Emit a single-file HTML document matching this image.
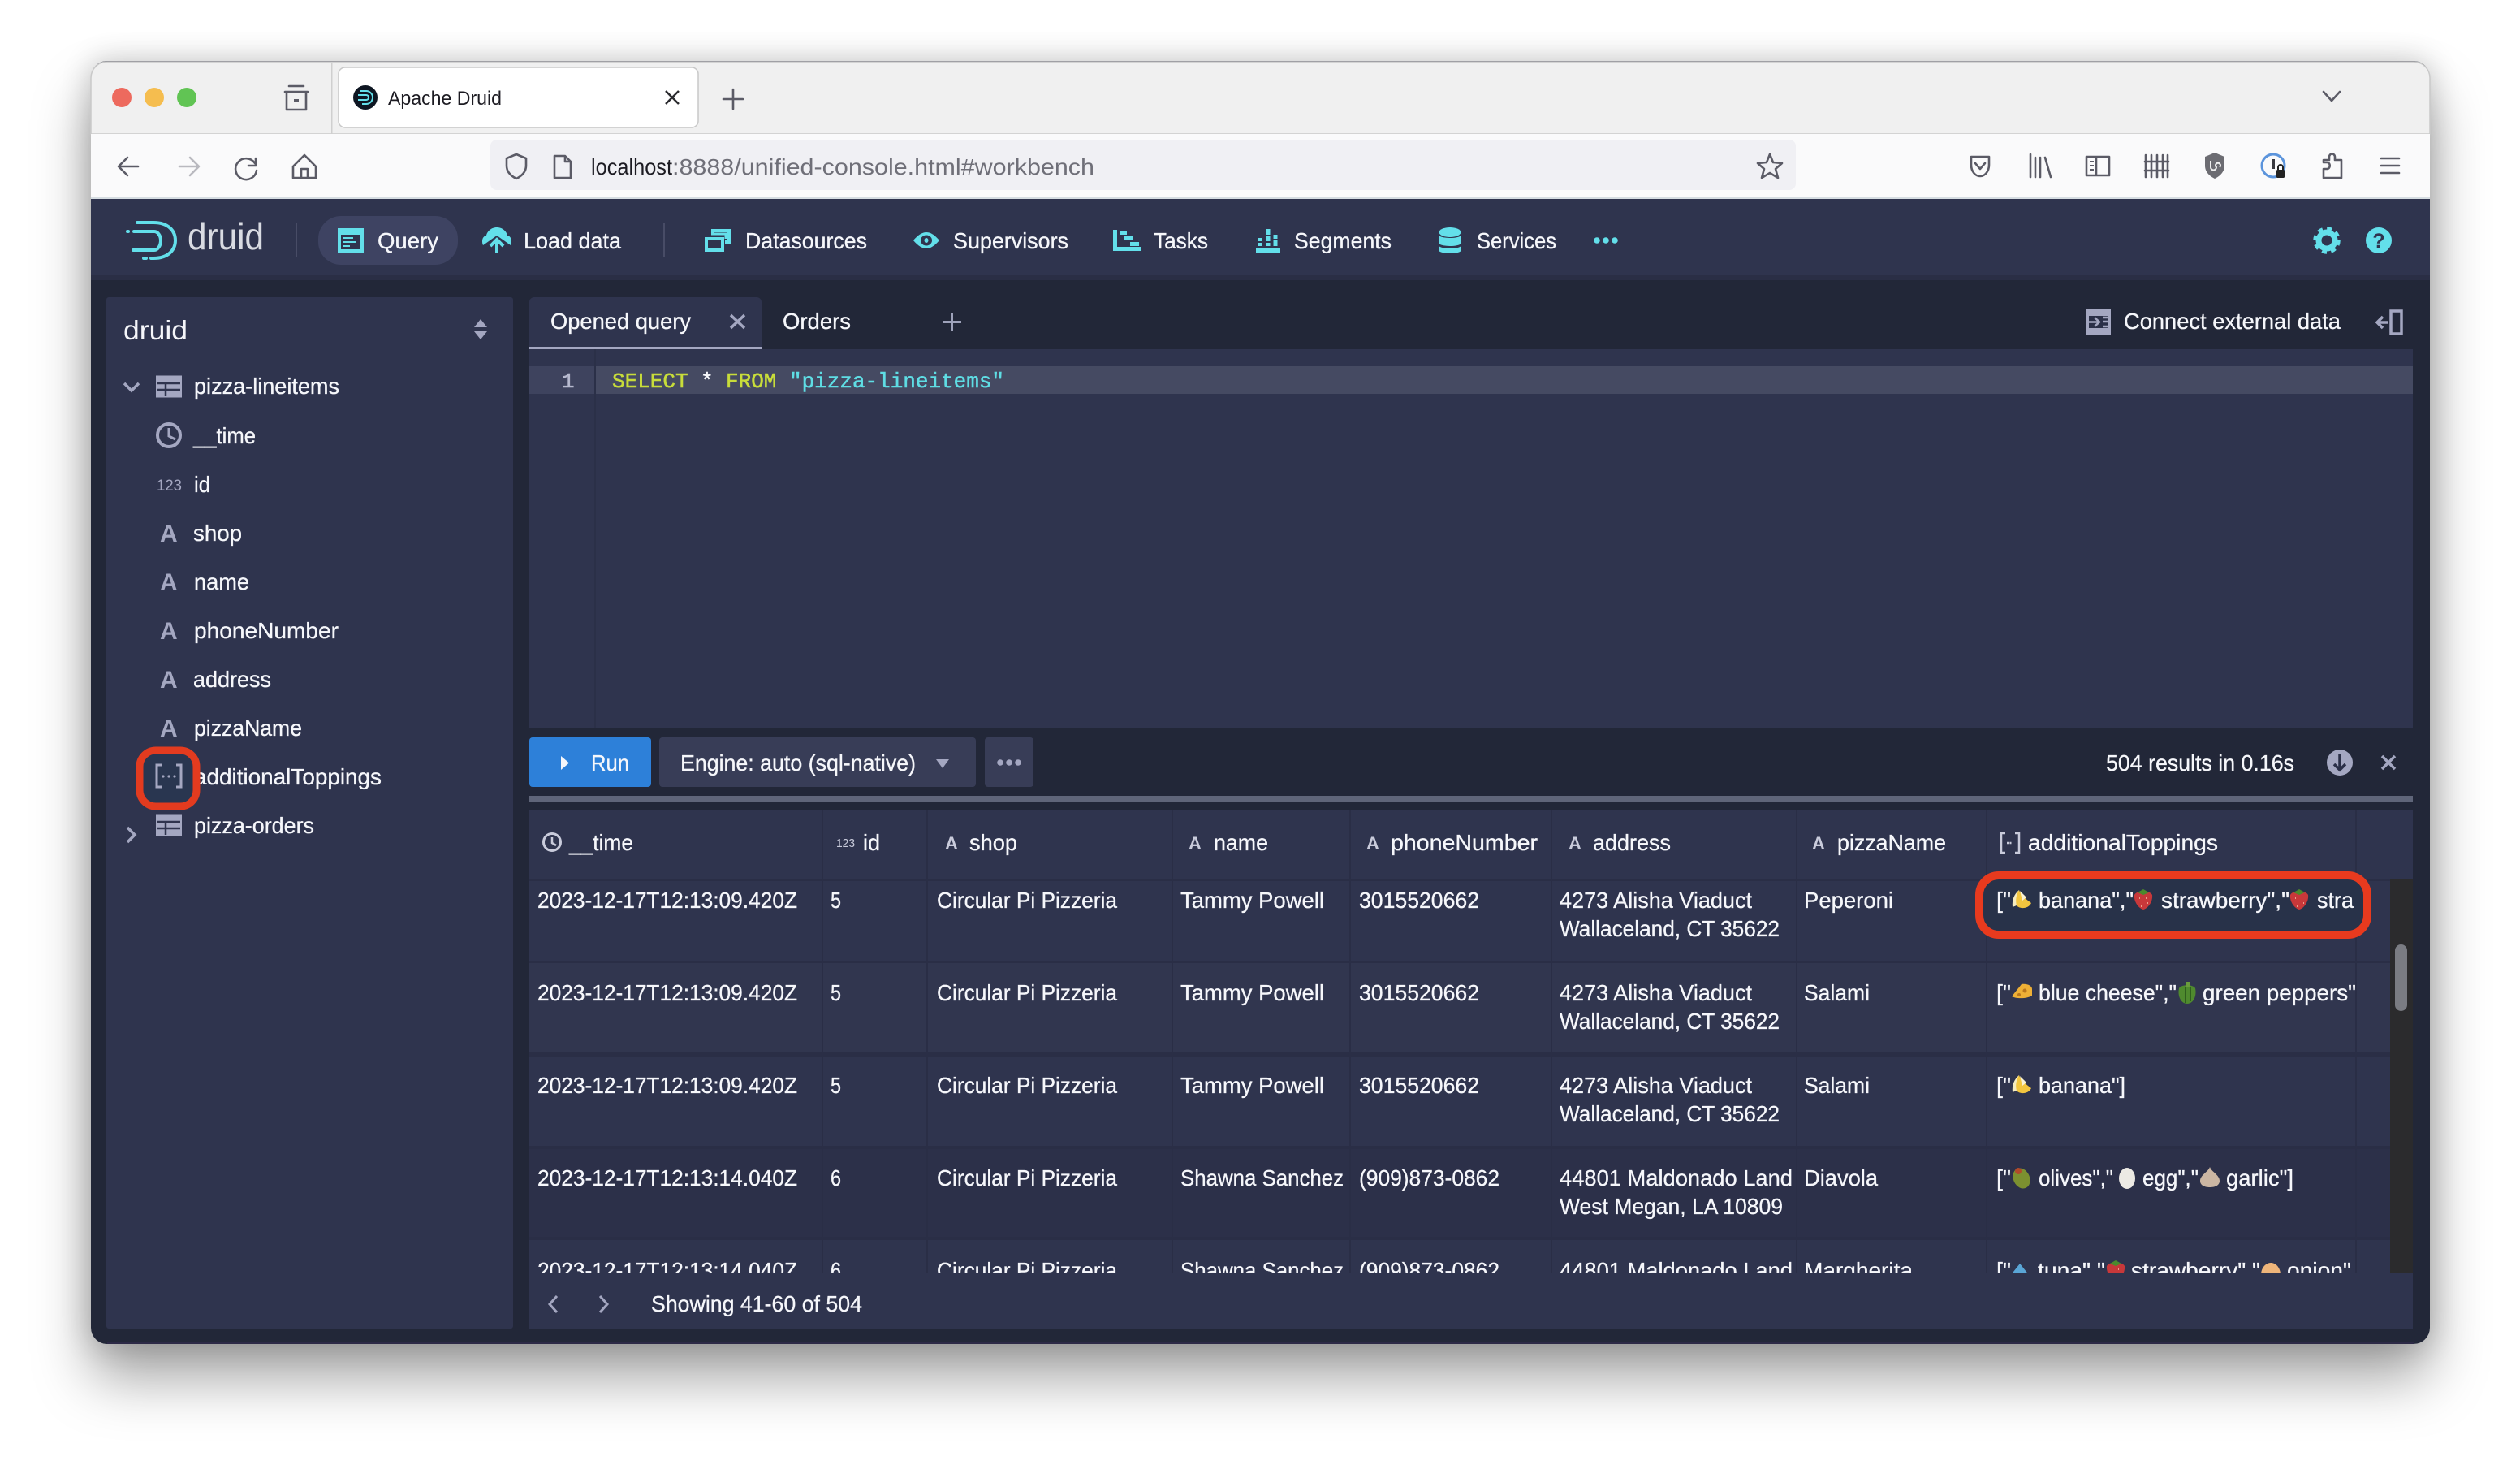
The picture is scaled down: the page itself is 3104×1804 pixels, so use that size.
<!DOCTYPE html>
<html lang="en"><head><meta charset="utf-8"><title>Apache Druid</title>
<style>
html,body{margin:0;padding:0;width:3104px;height:1804px;background:#fff;overflow:hidden}
#win{position:absolute;left:112px;top:75px;width:2881px;height:1580px;border-radius:20px;box-shadow:0 42px 70px 0 rgba(0,0,0,.36),0 0 34px 4px rgba(0,0,0,.16)}
svg{position:absolute;left:0;top:0}
text{font-family:"Liberation Sans",sans-serif;fill:#f5f6fa;font-size:27px}
.n{font-size:28px;fill:#f6f7fb;stroke:#f6f7fb;stroke-width:.3px}
.b{font-size:26px;fill:#1c1b22}
.m{font-family:"Liberation Mono",monospace;font-size:26px;stroke-width:.5px}
.A{font-size:30px;font-weight:bold;fill:#a4a7c1}
.h{font-size:22px;font-weight:bold;fill:#c9cbdb}
.s{fill:none;stroke:#5b5b66;stroke-width:2.6;stroke-linecap:round;stroke-linejoin:round}
.c{fill:#63dfea}
.g{fill:none;stroke:#a4a7c1;stroke-width:3}
</style></head><body>
<div id="win"></div>
<svg width="3104" height="1804" viewBox="0 0 3104 1804" xmlns="http://www.w3.org/2000/svg">
<defs>
<g id="tbl"><rect x="-16" y="-13.500" width="32" height="27" fill="#a4a7c1"/><path d="M-14-4H14M-14 4H14M-4-4V12" stroke="#2f344e" stroke-width="2.500" fill="none"/></g>
<g id="banana"><path d="M-3-12C-1-6 4-2 12 4 9 11-2 12-6 7-9 2-7-7-3-12Z" fill="#f3c63f"/><path d="M-3-12C-9-7-12 0-11 9L-6 7C-8 0-6-7-3-12Z" fill="#f5ecc0"/><path d="M-2-11C1-8 3-6 6-3L1 1Z" fill="#f8f2d5"/></g>
<g id="straw"><path d="M-11-6C-8-12 8-12 11-6 12 3 5 11 0 12-5 11-12 3-11-6Z" fill="#c8383a"/><path d="M-7-9 0-13 7-9 0-6Z" fill="#4b8a2d"/><path d="M-5-2h1M3-2h1M-2 3h1M5 4h1M-3 8h1" stroke="#e9a08c" stroke-width="2"/></g>
<g id="cheese"><path d="M-13 6-1-9C6-10 12-7 12-3V5C6 9-8 9-13 6Z" fill="#eeb036"/><circle cx="3" cy="-1" r="2.500" fill="#b9771d"/><circle cx="-4" cy="4" r="2" fill="#b9771d"/></g>
<g id="pepper"><path d="M-10-6C-8-11 8-11 10-6 12 3 8 13 0 13-8 13-12 3-10-6Z" fill="#4f8a2e"/><path d="M-2-8V12M4-8V10" stroke="#2f5e1e" stroke-width="2"/><rect x="-2" y="-14" width="5" height="6" fill="#6a9c3c"/></g>
<g id="olive"><ellipse rx="10" ry="13" fill="#7c9030" transform="rotate(-25)"/><circle cx="-4" cy="-9" r="4" fill="#b04a2a"/></g>
<g id="egg"><ellipse rx="10" ry="13" fill="#eceae4"/></g>
<g id="garlic"><path d="M0-14C2-8 12-4 12 3 12 9 6 11 0 11-6 11-12 9-12 3-12-4-2-8 0-14Z" fill="#cbb6a3"/></g>
<g id="tuna"><path d="M-12 6 0-9 12 6Z" fill="#5aa6d6"/></g>
<g id="onion"><path d="M-12 8C-13-4-6-10 0-10 6-10 13-4 12 8Z" fill="#eeb57a"/></g>
</defs>

<!-- window frame -->
<path d="M132 75H2973A20 20 0 0 1 2993 95V1635A20 20 0 0 1 2973 1655H132A20 20 0 0 1 112 1635V95A20 20 0 0 1 132 75Z" fill="#222738"/>
<rect x="132" y="1652" width="2841" height="3" fill="#2c2946"/>
<path d="M132 76H2973A20 20 0 0 1 2993 96V165H112V96A20 20 0 0 1 132 76Z" fill="#f0f0f0" stroke="#c9c9c9" stroke-width="1.500"/>
<rect x="112" y="165" width="2881" height="80" fill="#fafafb"/>
<rect x="112" y="243" width="2881" height="2" fill="#d6dde2"/>
<rect x="112" y="245" width="2881" height="100" fill="#2f344e"/>
<rect x="112" y="339" width="2881" height="6" fill="#2a2e45"/>

<!-- tab strip -->
<circle cx="150" cy="120" r="12" fill="#ed6a5e"/><circle cx="190" cy="120" r="12" fill="#f5bd4f"/><circle cx="230" cy="120" r="12" fill="#61c454"/>
<path class="s" d="M351 113H379M353 113V135H377V113M356 106H374" /><rect x="362" y="122" width="6" height="4" fill="#5b5b66"/>
<rect x="408" y="77" width="1.500" height="88" fill="#cfcfcf"/>
<rect x="417" y="83" width="443" height="74" rx="8" fill="#fff" stroke="#c8c8c8" stroke-width="1.500"/>
<circle cx="450" cy="120" r="15" fill="#0e1622"/>
<path d="M444 112H451A8 8 0 0 1 451 128H446M441 117H451A3 3 0 0 1 451 123H441" fill="none" stroke="#63dfea" stroke-width="2"/>
<text x="478" y="129" class="b" style="font-size:24px" textLength="140" lengthAdjust="spacingAndGlyphs">Apache Druid</text>
<path d="M820 112 836 128M836 112 820 128" stroke="#2a2a2e" stroke-width="2.500" fill="none"/>
<path class="s" d="M903 110V134M891 122H915"/>
<path class="s" d="M2862 113 2872 124 2882 113"/>

<!-- toolbar -->
<path class="s" d="M170 205H147M157 194 146 205 157 216"/>
<path class="s" style="stroke:#b9b9bf" d="M221 205H244M234 194 245 205 234 216"/>
<path class="s" d="M315 195V204H306M314 201A13 13 0 1 0 316 210"/>
<path class="s" d="M375 191 361 205V219H389V205ZM371 219V208H379V219"/>
<rect x="604" y="172" width="1608" height="62" rx="8" fill="#f0f0f4"/>
<path class="s" d="M636 190 624 195V204C624 212 630 217 636 220 642 217 648 212 648 204V195Z"/>
<path class="s" d="M683 192H696L703 199V219H683ZM696 192V199H703"/>
<text x="728" y="215" style="font-size:28px;fill:#1c1b22" textLength="100" lengthAdjust="spacingAndGlyphs">localhost</text>
<text x="828" y="215" style="font-size:28px;fill:#6f6f78" textLength="520" lengthAdjust="spacingAndGlyphs">:8888/unified-console.html#workbench</text>
<path class="s" d="M2180 190 2184 200 2195 201 2187 208 2190 219 2180 213 2170 219 2173 208 2165 201 2176 200Z"/>
<path class="s" d="M2428 193H2450V203C2450 211 2445 217 2439 217 2433 217 2428 211 2428 203ZM2433 201 2439 208 2445 201"/>
<path class="s" d="M2501 190V218M2507 194V218M2513 194V218M2519 194 2526 218"/>
<path class="s" d="M2570 193H2598V216H2570ZM2582 193V216"/><path d="M2574 199H2579M2574 204H2579M2574 209H2579" stroke="#5b5b66" stroke-width="2"/>
<path class="s" d="M2643 191V218M2650 191V218M2657 191V218M2664 191V218M2670 191V218M2642 199H2671M2642 210H2671"/>
<path d="M2728 188 2716 193V204C2716 212 2722 217 2728 220 2734 217 2740 212 2740 204V193Z" fill="#6c6c72"/>
<path d="M2723 198V206A3.500 3.500 0 0 0 2730 206A3 3 0 1 1 2734 206" fill="none" stroke="#f0f0f0" stroke-width="2"/>
<circle cx="2800" cy="204" r="14" fill="none" stroke="#5b94dc" stroke-width="3"/><rect x="2798" y="196" width="4" height="12" fill="#3a3a40"/>
<rect x="2804" y="209" width="10" height="10" rx="1.500" fill="#222"/><path d="M2806 209V206A3 3 0 0 1 2812 206V209" fill="none" stroke="#222" stroke-width="2"/>
<path class="s" d="M2862 219V208H2866C2871 208 2871 200 2866 200H2862V197H2869V193A3.500 3.500 0 0 1 2876 193V197H2884V219Z"/>
<path class="s" d="M2933 195H2955M2933 204H2955M2933 213H2955"/>

<!-- nav -->
<g fill="none" stroke="#63dfea" stroke-width="4" stroke-linecap="round">
<path d="M169 274H189C208 274 216 285 216 296 216 307 208 318 189 318H186"/>
<path d="M157 285H158M165 285H190C194 285 198 290 198 296 198 303 194 308 190 308H164"/>
<path d="M177 318H180"/>
</g>
<text x="231" y="307" style="font-size:46px;fill:#d9dbe2" textLength="94" lengthAdjust="spacingAndGlyphs">druid</text>
<rect x="364" y="275" width="2" height="41" fill="#484c66"/>
<rect x="817" y="275" width="2" height="41" fill="#484c66"/>
<rect x="392" y="266" width="172" height="60" rx="28" fill="#3e4362"/>
<rect x="416" y="281" width="32" height="30" class="c"/><rect x="420" y="289" width="24" height="18" fill="#2f344e"/>
<path d="M422 293H435M422 298H438M422 303H431" stroke="#63dfea" stroke-width="2"/>
<text x="465" y="306" class="n" textLength="75" lengthAdjust="spacingAndGlyphs">Query</text>
<path class="c" d="M612 280C619 280 624 285 625 290 630 291 631 297 629 302L612 290 595 302C593 297 594 291 599 290 600 285 605 280 612 280Z"/>
<path d="M612 311V296M604 303 612 295 620 303" fill="none" stroke="#63dfea" stroke-width="4"/>
<text x="645" y="306" class="n" textLength="120" lengthAdjust="spacingAndGlyphs">Load data</text>
<path d="M870 294H890V308H870ZM878 288V284H898V298H893" fill="none" stroke="#63dfea" stroke-width="4"/>
<path d="M876 288H894V294" fill="none" stroke="#63dfea" stroke-width="3"/>
<text x="918" y="306" class="n" textLength="150" lengthAdjust="spacingAndGlyphs">Datasources</text>
<path class="c" d="M1125 296C1131 289 1136 286 1141 286 1146 286 1151 289 1157 296 1151 303 1146 306 1141 306 1136 306 1131 303 1125 296Z"/>
<ellipse cx="1141" cy="296" rx="7" ry="6.500" fill="#2f344e"/><ellipse cx="1141" cy="296" rx="2.500" ry="3" class="c"/>
<text x="1174" y="306" class="n" textLength="142" lengthAdjust="spacingAndGlyphs">Supervisors</text>
<path class="c" d="M1371 283H1376V304H1405V309H1371Z"/><rect x="1379" y="284" width="9" height="5" class="c"/><rect x="1385" y="291" width="10" height="5" class="c"/><rect x="1392" y="298" width="11" height="5" class="c"/>
<text x="1421" y="306" class="n" textLength="67" lengthAdjust="spacingAndGlyphs">Tasks</text>
<rect x="1547" y="306" width="30" height="5" class="c"/>
<path d="M1552 293V297M1552 299V303M1562 282V289M1562 291V297M1562 299V303M1571 289V294M1571 296V303" stroke="#63dfea" stroke-width="5" fill="none"/>
<text x="1594" y="306" class="n" textLength="120" lengthAdjust="spacingAndGlyphs">Segments</text>
<ellipse cx="1786" cy="286" rx="13.500" ry="6" class="c"/><path class="c" d="M1772.500 290C1776 294 1796 294 1799.500 290V300C1796 304 1776 304 1772.500 300ZM1772.500 303C1776 307 1796 307 1799.500 303V309C1796 313 1776 313 1772.500 309Z"/>
<text x="1819" y="306" class="n" textLength="98" lengthAdjust="spacingAndGlyphs">Services</text>
<circle cx="1967" cy="296" r="3.800" class="c"/><circle cx="1978" cy="296" r="3.800" class="c"/><circle cx="1989" cy="296" r="3.800" class="c"/>
<circle cx="2866" cy="296" r="10" fill="none" stroke="#63dfea" stroke-width="7"/><circle cx="2866" cy="296" r="14.500" fill="none" stroke="#63dfea" stroke-width="4.500" stroke-dasharray="6 5.400"/>
<circle cx="2930" cy="296" r="16" class="c"/><text x="2930" y="305" text-anchor="middle" style="font-size:25px;font-weight:bold;fill:#2f344e">?</text>

<!-- sidebar -->
<rect x="131" y="366" width="501" height="1270" rx="3" fill="#2f344e"/>
<text x="152" y="418" style="font-size:33px" textLength="79" lengthAdjust="spacingAndGlyphs">druid</text>
<path d="M592 393 600 403H584ZM592 418 584 408H600Z" fill="#a4a7c1"/>
<path d="M153 472 162 481 171 472" fill="none" stroke="#a4a7c1" stroke-width="3.500"/>
<use href="#tbl" x="208" y="476"/>
<text x="239" y="485" class="n" textLength="179" lengthAdjust="spacingAndGlyphs">pizza-lineitems</text>
<circle cx="208" cy="536" r="14" class="g" style="stroke-width:4"/><path d="M208 527V537L216 541" class="g"/>
<text x="238" y="546" class="n" textLength="77" lengthAdjust="spacingAndGlyphs">__time</text>
<text x="193" y="604" style="font-size:19px;fill:#a4a7c1" textLength="31" lengthAdjust="spacingAndGlyphs">123</text>
<text x="239" y="606" class="n" textLength="20" lengthAdjust="spacingAndGlyphs">id</text>
<text x="197" y="667" class="A">A</text><text x="238" y="666" class="n" textLength="60" lengthAdjust="spacingAndGlyphs">shop</text>
<text x="197" y="727" class="A">A</text><text x="239" y="726" class="n" textLength="68" lengthAdjust="spacingAndGlyphs">name</text>
<text x="197" y="787" class="A">A</text><text x="239" y="786" class="n" textLength="178" lengthAdjust="spacingAndGlyphs">phoneNumber</text>
<text x="197" y="847" class="A">A</text><text x="238" y="846" class="n" textLength="96" lengthAdjust="spacingAndGlyphs">address</text>
<text x="197" y="907" class="A">A</text><text x="239" y="906" class="n" textLength="133" lengthAdjust="spacingAndGlyphs">pizzaName</text>
<text x="239" y="966" class="n" textLength="231" lengthAdjust="spacingAndGlyphs">additionalToppings</text>
<rect x="172" y="924" width="70" height="69" rx="20" fill="#293650" stroke="#e33b1f" stroke-width="9"/>
<path d="M199 942H193V969H199M217 942H223V969H217" class="g"/><circle cx="201" cy="956" r="1.600" fill="#a4a7c1"/><circle cx="208" cy="956" r="1.600" fill="#a4a7c1"/><circle cx="215" cy="956" r="1.600" fill="#a4a7c1"/>
<path d="M157 1019 166 1028 157 1037" fill="none" stroke="#a4a7c1" stroke-width="3.500"/>
<use href="#tbl" x="208" y="1016"/>
<text x="239" y="1026" class="n" textLength="148" lengthAdjust="spacingAndGlyphs">pizza-orders</text>

<!-- query tabs -->
<path d="M652 372A6 6 0 0 1 658 366H932A6 6 0 0 1 938 372V430H652Z" fill="#2f344e"/>
<rect x="652" y="427" width="286" height="3.500" fill="#a4a7c1"/>
<text x="678" y="405" class="n" textLength="173" lengthAdjust="spacingAndGlyphs">Opened query</text>
<path d="M900 388 917 404M917 388 900 404" stroke="#a4a7c1" stroke-width="3.500" fill="none"/>
<text x="964" y="405" class="n" textLength="84" lengthAdjust="spacingAndGlyphs">Orders</text>
<path d="M1172.500 385V408M1161 396.500H1184" stroke="#9ea2ba" stroke-width="3" fill="none"/>
<rect x="2569" y="381" width="31" height="31" fill="#a4a7c1"/><path d="M2573 389H2596V404H2573Z" fill="#2b3048"/><path d="M2569 396.500H2585M2580 391 2586 396.500 2580 402M2590 391H2596M2590 396H2596M2590 402H2596" stroke="#a4a7c1" stroke-width="2.500" fill="none"/>
<text x="2616" y="405" class="n" textLength="267" lengthAdjust="spacingAndGlyphs">Connect external data</text>
<path d="M2945 383H2958V411H2945ZM2941 397H2929M2935 390 2928 397 2935 404" fill="none" stroke="#a4a7c1" stroke-width="3.500"/>

<!-- editor -->
<rect x="652" y="430" width="2320" height="467" fill="#2f344e"/>
<rect x="652" y="451" width="82" height="34" fill="#3e435e"/>
<rect x="734" y="451" width="2238" height="34" fill="#454a62"/>
<rect x="732" y="430" width="2" height="467" fill="#2b3048"/>
<text x="692" y="477" class="m" style="fill:#b8bbd0;stroke:#b8bbd0">1</text>
<text x="754" y="477" class="m" style="fill:#c8dd3a;stroke:#c8dd3a">SELECT</text>
<text x="863" y="477" class="m" style="fill:#f6f7fb;stroke:#f6f7fb">*</text>
<text x="894" y="477" class="m" style="fill:#c8dd3a;stroke:#c8dd3a">FROM</text>
<text x="972" y="477" class="m" style="fill:#5fdde4;stroke:#5fdde4" textLength="265" lengthAdjust="spacingAndGlyphs">"pizza-lineitems"</text>

<!-- run bar -->
<rect x="652" y="908" width="150" height="61" rx="4" fill="#2d80d9"/>
<path d="M691 931 701 939.500 691 948Z" fill="#f5f6fa"/>
<text x="728" y="949" class="n" textLength="47" lengthAdjust="spacingAndGlyphs">Run</text>
<rect x="812" y="908" width="390" height="61" rx="4" fill="#383d57"/>
<text x="838" y="949" class="n" textLength="290" lengthAdjust="spacingAndGlyphs">Engine: auto (sql-native)</text>
<path d="M1153 935H1169L1161 946Z" fill="#a4a7c1"/>
<rect x="1213" y="908" width="60" height="61" rx="4" fill="#383d57"/>
<circle cx="1232" cy="939" r="3.800" fill="#a4a7c1"/><circle cx="1243" cy="939" r="3.800" fill="#a4a7c1"/><circle cx="1254" cy="939" r="3.800" fill="#a4a7c1"/>
<text x="2594" y="949" class="n" textLength="232" lengthAdjust="spacingAndGlyphs">504 results in 0.16s</text>
<circle cx="2882" cy="939" r="16" fill="#a4a7c1"/><path d="M2882 929V947M2875 941 2882 948 2889 941" fill="none" stroke="#2b3048" stroke-width="3.500"/>
<path d="M2934 931 2950 947M2950 931 2934 947" stroke="#a4a7c1" stroke-width="3.500" fill="none"/>
<rect x="652" y="980" width="2320" height="7" fill="#5f6579"/>

<!-- table -->
<rect x="652" y="997" width="2320" height="640" fill="#2f344e"/>
<rect x="652" y="1185" width="2292" height="111" fill="#31364f"/>
<rect x="652" y="1414" width="2292" height="109" fill="#2c3049"/>
<rect x="652" y="1082" width="2292" height="3" fill="#2a2e46"/>
<rect x="652" y="1183" width="2292" height="3" fill="#2a2e46"/>
<rect x="652" y="1296" width="2292" height="5" fill="#2a2e46"/>
<rect x="652" y="1411" width="2292" height="4" fill="#2a2e46"/>
<rect x="652" y="1523" width="2292" height="4" fill="#2a2e46"/>
<g fill="#2a2e46"><rect x="1012" y="997" width="2" height="570"/><rect x="1141" y="997" width="2" height="570"/><rect x="1443" y="997" width="2" height="570"/><rect x="1662" y="997" width="2" height="570"/><rect x="1910" y="997" width="2" height="570"/><rect x="2212" y="997" width="2" height="570"/><rect x="2446" y="997" width="2" height="570"/><rect x="2901" y="997" width="2" height="570"/></g>
<rect x="2944" y="1082" width="28" height="485" fill="#2b2b2d"/>
<rect x="2950" y="1163" width="15" height="82" rx="7.500" fill="#7a7c83"/>

<!-- headers -->
<circle cx="680" cy="1037" r="10.500" class="g" style="stroke:#c9cbdb"/><path d="M680 1031V1038L685 1041" class="g" style="stroke-width:2.500;stroke:#c9cbdb"/>
<text x="701" y="1047" class="n" textLength="79" lengthAdjust="spacingAndGlyphs">__time</text>
<text x="1030" y="1043" style="font-size:15px;fill:#c9cbdb" textLength="23" lengthAdjust="spacingAndGlyphs">123</text>
<text x="1063" y="1047" class="n" textLength="21" lengthAdjust="spacingAndGlyphs">id</text>
<text x="1164" y="1046" class="h">A</text><text x="1194" y="1047" class="n" textLength="59" lengthAdjust="spacingAndGlyphs">shop</text>
<text x="1464" y="1046" class="h">A</text><text x="1495" y="1047" class="n" textLength="67" lengthAdjust="spacingAndGlyphs">name</text>
<text x="1683" y="1046" class="h">A</text><text x="1713" y="1047" class="n" textLength="181" lengthAdjust="spacingAndGlyphs">phoneNumber</text>
<text x="1932" y="1046" class="h">A</text><text x="1962" y="1047" class="n" textLength="96" lengthAdjust="spacingAndGlyphs">address</text>
<text x="2232" y="1046" class="h">A</text><text x="2263" y="1047" class="n" textLength="134" lengthAdjust="spacingAndGlyphs">pizzaName</text>
<path d="M2470 1026H2465V1050H2470M2482 1026H2487V1050H2482" fill="none" stroke="#c9cbdb" stroke-width="2.500"/><path d="M2472 1038H2480" stroke="#c9cbdb" stroke-width="2.500" stroke-dasharray="2 1.500"/>
<text x="2498" y="1047" class="n" textLength="234" lengthAdjust="spacingAndGlyphs">additionalToppings</text>

<!-- red highlight -->
<rect x="2438" y="1078" width="478" height="73" rx="24" fill="#283249" stroke="#e83a1e" stroke-width="10"/>

<!-- row 1 -->
<text x="662" y="1118" class="n" textLength="320" lengthAdjust="spacingAndGlyphs">2023-12-17T12:13:09.420Z</text>
<text x="1023" y="1118" class="n" textLength="13" lengthAdjust="spacingAndGlyphs">5</text>
<text x="1154" y="1118" class="n" textLength="222" lengthAdjust="spacingAndGlyphs">Circular Pi Pizzeria</text>
<text x="1454" y="1118" class="n" textLength="177" lengthAdjust="spacingAndGlyphs">Tammy Powell</text>
<text x="1674" y="1118" class="n" textLength="148" lengthAdjust="spacingAndGlyphs">3015520662</text>
<text x="1921" y="1118" class="n" textLength="237" lengthAdjust="spacingAndGlyphs">4273 Alisha Viaduct</text>
<text x="1921" y="1153" class="n" textLength="271" lengthAdjust="spacingAndGlyphs">Wallaceland, CT 35622</text>
<text x="2222" y="1118" class="n" textLength="110" lengthAdjust="spacingAndGlyphs">Peperoni</text>
<text x="2459" y="1118" class="n" textLength="18" lengthAdjust="spacingAndGlyphs">["</text><use href="#banana" x="2490" y="1108"/>
<text x="2511" y="1118" class="n" textLength="117" lengthAdjust="spacingAndGlyphs">banana","</text><use href="#straw" x="2640" y="1108"/>
<text x="2662" y="1118" class="n" textLength="158" lengthAdjust="spacingAndGlyphs">strawberry","</text><use href="#straw" x="2832" y="1108"/>
<text x="2854" y="1118" class="n" textLength="45" lengthAdjust="spacingAndGlyphs">stra</text>
<!-- row 2 -->
<text x="662" y="1232" class="n" textLength="320" lengthAdjust="spacingAndGlyphs">2023-12-17T12:13:09.420Z</text>
<text x="1023" y="1232" class="n" textLength="13" lengthAdjust="spacingAndGlyphs">5</text>
<text x="1154" y="1232" class="n" textLength="222" lengthAdjust="spacingAndGlyphs">Circular Pi Pizzeria</text>
<text x="1454" y="1232" class="n" textLength="177" lengthAdjust="spacingAndGlyphs">Tammy Powell</text>
<text x="1674" y="1232" class="n" textLength="148" lengthAdjust="spacingAndGlyphs">3015520662</text>
<text x="1921" y="1232" class="n" textLength="237" lengthAdjust="spacingAndGlyphs">4273 Alisha Viaduct</text>
<text x="1921" y="1267" class="n" textLength="271" lengthAdjust="spacingAndGlyphs">Wallaceland, CT 35622</text>
<text x="2222" y="1232" class="n" textLength="81" lengthAdjust="spacingAndGlyphs">Salami</text>
<text x="2459" y="1232" class="n" textLength="18" lengthAdjust="spacingAndGlyphs">["</text><use href="#cheese" x="2491" y="1221"/>
<text x="2511" y="1232" class="n" textLength="170" lengthAdjust="spacingAndGlyphs">blue cheese","</text><use href="#pepper" x="2694" y="1223"/>
<text x="2713" y="1232" class="n" textLength="189" lengthAdjust="spacingAndGlyphs">green peppers"</text>
<!-- row 3 -->
<text x="662" y="1346" class="n" textLength="320" lengthAdjust="spacingAndGlyphs">2023-12-17T12:13:09.420Z</text>
<text x="1023" y="1346" class="n" textLength="13" lengthAdjust="spacingAndGlyphs">5</text>
<text x="1154" y="1346" class="n" textLength="222" lengthAdjust="spacingAndGlyphs">Circular Pi Pizzeria</text>
<text x="1454" y="1346" class="n" textLength="177" lengthAdjust="spacingAndGlyphs">Tammy Powell</text>
<text x="1674" y="1346" class="n" textLength="148" lengthAdjust="spacingAndGlyphs">3015520662</text>
<text x="1921" y="1346" class="n" textLength="237" lengthAdjust="spacingAndGlyphs">4273 Alisha Viaduct</text>
<text x="1921" y="1381" class="n" textLength="271" lengthAdjust="spacingAndGlyphs">Wallaceland, CT 35622</text>
<text x="2222" y="1346" class="n" textLength="81" lengthAdjust="spacingAndGlyphs">Salami</text>
<text x="2459" y="1346" class="n" textLength="18" lengthAdjust="spacingAndGlyphs">["</text><use href="#banana" x="2490" y="1336"/>
<text x="2511" y="1346" class="n" textLength="107" lengthAdjust="spacingAndGlyphs">banana"]</text>
<!-- row 4 -->
<text x="662" y="1460" class="n" textLength="320" lengthAdjust="spacingAndGlyphs">2023-12-17T12:13:14.040Z</text>
<text x="1023" y="1460" class="n" textLength="13" lengthAdjust="spacingAndGlyphs">6</text>
<text x="1154" y="1460" class="n" textLength="222" lengthAdjust="spacingAndGlyphs">Circular Pi Pizzeria</text>
<text x="1454" y="1460" class="n" textLength="201" lengthAdjust="spacingAndGlyphs">Shawna Sanchez</text>
<text x="1674" y="1460" class="n" textLength="173" lengthAdjust="spacingAndGlyphs">(909)873-0862</text>
<text x="1921" y="1460" class="n" textLength="287" lengthAdjust="spacingAndGlyphs">44801 Maldonado Land</text>
<text x="1921" y="1495" class="n" textLength="275" lengthAdjust="spacingAndGlyphs">West Megan, LA 10809</text>
<text x="2222" y="1460" class="n" textLength="91" lengthAdjust="spacingAndGlyphs">Diavola</text>
<text x="2459" y="1460" class="n" textLength="18" lengthAdjust="spacingAndGlyphs">["</text><use href="#olive" x="2490" y="1451"/>
<text x="2511" y="1460" class="n" textLength="92" lengthAdjust="spacingAndGlyphs">olives","</text><use href="#egg" x="2620" y="1451"/>
<text x="2639" y="1460" class="n" textLength="69" lengthAdjust="spacingAndGlyphs">egg","</text><use href="#garlic" x="2722" y="1451"/>
<text x="2742" y="1460" class="n" textLength="83" lengthAdjust="spacingAndGlyphs">garlic"]</text>
<!-- row 5 (clipped) -->
<text x="662" y="1574" class="n" textLength="320" lengthAdjust="spacingAndGlyphs">2023-12-17T12:13:14.040Z</text>
<text x="1023" y="1574" class="n" textLength="13" lengthAdjust="spacingAndGlyphs">6</text>
<text x="1154" y="1574" class="n" textLength="222" lengthAdjust="spacingAndGlyphs">Circular Pi Pizzeria</text>
<text x="1454" y="1574" class="n" textLength="201" lengthAdjust="spacingAndGlyphs">Shawna Sanchez</text>
<text x="1674" y="1574" class="n" textLength="173" lengthAdjust="spacingAndGlyphs">(909)873-0862</text>
<text x="1921" y="1574" class="n" textLength="287" lengthAdjust="spacingAndGlyphs">44801 Maldonado Land</text>
<text x="2222" y="1574" class="n" textLength="134" lengthAdjust="spacingAndGlyphs">Margherita</text>
<text x="2459" y="1574" class="n" textLength="18" lengthAdjust="spacingAndGlyphs">["</text><use href="#tuna" x="2488" y="1565"/>
<text x="2510" y="1574" class="n" textLength="83" lengthAdjust="spacingAndGlyphs">tuna","</text><use href="#straw" x="2606" y="1565"/>
<text x="2625" y="1574" class="n" textLength="159" lengthAdjust="spacingAndGlyphs">strawberry","</text><use href="#onion" x="2797" y="1565"/>
<text x="2817" y="1574" class="n" textLength="79" lengthAdjust="spacingAndGlyphs">onion"</text>

<!-- footer -->
<rect x="652" y="1567" width="2320" height="70" fill="#2f344e"/>
<path d="M686 1596 677 1606 686 1616" fill="none" stroke="#a4a7c1" stroke-width="3"/>
<path d="M739 1596 748 1606 739 1616" fill="none" stroke="#a4a7c1" stroke-width="3"/>
<text x="802" y="1615" class="n" textLength="260" lengthAdjust="spacingAndGlyphs">Showing 41-60 of 504</text>
</svg>
</body></html>
